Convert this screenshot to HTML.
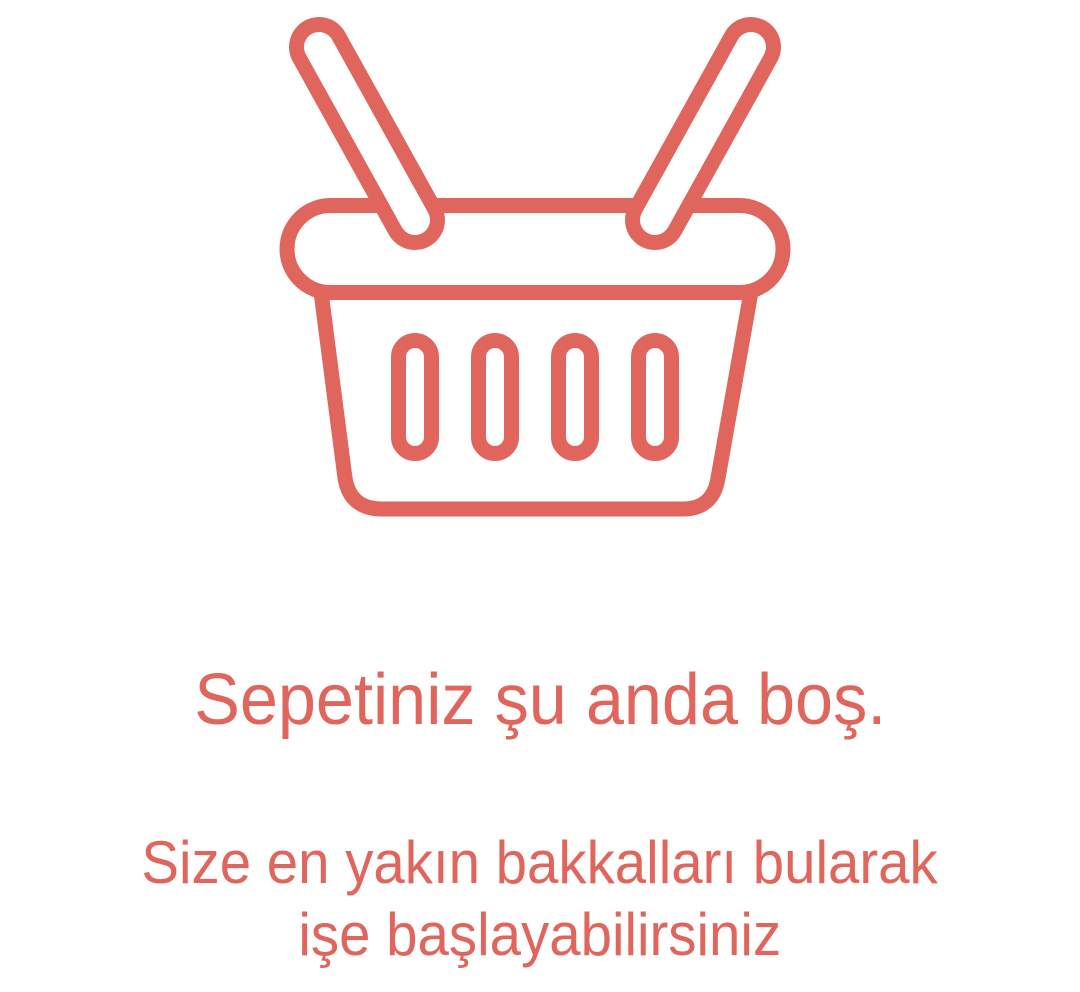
<!DOCTYPE html>
<html><head><meta charset="utf-8"><style>
html,body{margin:0;padding:0;background:#fff;width:1080px;height:992px;overflow:hidden}
svg{position:absolute;left:0;top:0}
.t{position:absolute;left:0;width:1080px;text-align:center;color:#e0665d;font-family:"Liberation Sans",Arial,sans-serif;white-space:nowrap}
.t span{display:inline-block;transform:scaleX(0.94)}
</style></head><body>
<svg width="1080" height="560" viewBox="0 0 1080 560">
<g fill="none" stroke="#e0665d" stroke-width="15" stroke-linejoin="round">
<path d="M321 292 L345 478 Q350 509 382 509 L683 509 Q713 509 718 478 L751 292"/>
<rect x="287" y="205.5" width="496" height="87" rx="43.5"/>
<rect x="398.5" y="340.5" width="33" height="113" rx="16.5"/>
<rect x="478.5" y="340.5" width="33" height="113" rx="16.5"/>
<rect x="558.5" y="340.5" width="33" height="113" rx="16.5"/>
<rect x="638.5" y="340.5" width="33" height="113" rx="16.5"/>
</g>
<g stroke-linecap="round">
<line x1="319" y1="47" x2="415" y2="220" stroke="#e0665d" stroke-width="60"/>
<line x1="319" y1="47" x2="415" y2="220" stroke="#fff" stroke-width="30"/>
<line x1="751" y1="47" x2="655" y2="220" stroke="#e0665d" stroke-width="60"/>
<line x1="751" y1="47" x2="655" y2="220" stroke="#fff" stroke-width="30"/>
</g>
</svg>
<div class="t" style="top:660px;font-size:72px;line-height:80px"><span style="transform:scaleX(0.95)">Sepetiniz şu anda boş.</span></div>
<div class="t" style="top:827px;font-size:60px;line-height:72px"><span>Size en yakın bakkalları bularak</span><br><span>işe başlayabilirsiniz</span></div>
</body></html>
